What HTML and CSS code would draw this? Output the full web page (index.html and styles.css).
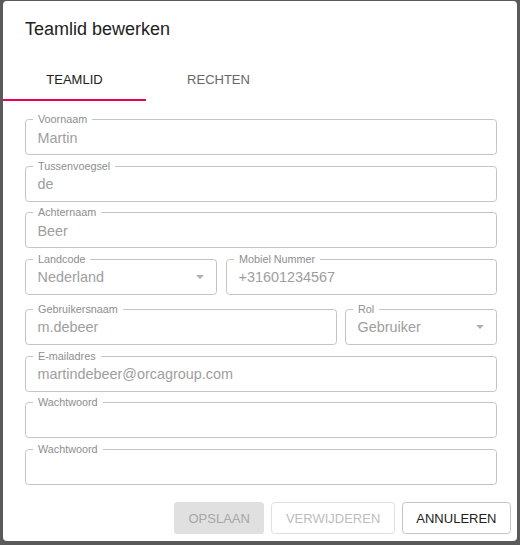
FILE: index.html
```html
<!DOCTYPE html>
<html lang="nl">
<head>
<meta charset="utf-8">
<title>Teamlid bewerken</title>
<link rel="stylesheet" href="styles.css">
</head>
<body>
<div class="dialog">
  <h2 class="title">Teamlid bewerken</h2>
  <div class="tabs">
    <div class="tab active">TEAMLID</div>
    <div class="tab">RECHTEN</div>
  </div>
  <div class="content">
    <div class="field"><span class="label">Voornaam</span><div class="value">Martin</div></div>
    <div class="field"><span class="label">Tussenvoegsel</span><div class="value">de</div></div>
    <div class="field"><span class="label">Achternaam</span><div class="value">Beer</div></div>
    <div class="row row-country">
      <div class="field select"><span class="label">Landcode</span><div class="value">Nederland</div>
        <svg class="arrow" width="8" height="4" viewBox="0 0 8 4"><path d="M0 0h8L4 4z" fill="#b0b0b0"/></svg></div>
      <div class="field"><span class="label">Mobiel Nummer</span><div class="value">+31601234567</div></div>
    </div>
    <div class="row row-user">
      <div class="field"><span class="label">Gebruikersnaam</span><div class="value">m.debeer</div></div>
      <div class="field select"><span class="label">Rol</span><div class="value">Gebruiker</div>
        <svg class="arrow" width="8" height="4" viewBox="0 0 8 4"><path d="M0 0h8L4 4z" fill="#b0b0b0"/></svg></div>
    </div>
    <div class="field"><span class="label">E-mailadres</span><div class="value">martindebeer@orcagroup.com</div></div>
    <div class="field"><span class="label">Wachtwoord</span><div class="value"></div></div>
    <div class="field"><span class="label">Wachtwoord</span><div class="value"></div></div>
  </div>
  <div class="actions">
    <button class="btn btn-contained" disabled>OPSLAAN</button>
    <button class="btn btn-outlined" disabled>VERWIJDEREN</button>
    <button class="btn btn-outlined btn-active">ANNULEREN</button>
  </div>
</div>
</body>
</html>
```

FILE: styles.css
```css
* { box-sizing: border-box; }

html, body {
  margin: 0;
  padding: 0;
}

body {
  background: #5a5a5a;
  width: 520px;
  height: 545px;
  overflow: hidden;
  font-family: "Liberation Sans", Arial, sans-serif;
}

.dialog {
  margin: 1px 0 0 3px;
  width: 514px;
  height: 540px;
  background: #ffffff;
  border-radius: 4px;
  display: flex;
  flex-direction: column;
}

.title {
  margin: 0;
  padding: 14px 22px;
  font-size: 18px;
  line-height: 29px;
  font-weight: normal;
  color: #212121;
}

.tabs {
  display: flex;
  height: 43px;
}

.tab {
  width: 143px;
  display: flex;
  align-items: center;
  justify-content: center;
  font-size: 13px;
  color: #666666;
  border-bottom: 2px solid transparent;
  padding-top: 2px;
}

.tab + .tab {
  width: 145px;
}

.tab.active {
  color: #212121;
  border-bottom-color: #e6005a;
}

.content {
  padding: 18px 20px 0 22px;
  display: flex;
  flex-direction: column;
  gap: 10.6px;
}

.row {
  display: grid;
}

.row-country {
  grid-template-columns: 192px 1fr;
  column-gap: 9px;
}

.row-user {
  grid-template-columns: 1fr 152px;
  column-gap: 8px;
  margin-top: 3.6px;
}

.field {
  position: relative;
  height: 36px;
  border: 1px solid #c4c4c4;
  border-radius: 3.6px;
  display: flex;
  align-items: center;
}

.label {
  position: absolute;
  top: -7px;
  left: 7px;
  padding: 0 5px;
  background: #ffffff;
  font-size: 10.8px;
  line-height: 13px;
  color: #8e8e8e;
  white-space: nowrap;
}

.value {
  flex: 1;
  padding: 0 11.5px;
  font-size: 14.4px;
  line-height: 18px;
  color: #9e9e9e;
  white-space: nowrap;
  padding-top: 1px;
}

.arrow {
  margin-right: 12px;
  flex: none;
}

.actions {
  margin-top: auto;
  padding: 0 6px 7px 0;
  display: flex;
  justify-content: flex-end;
  gap: 7px;
}

.btn {
  height: 32px;
  padding: 0 13.5px;
  border-radius: 3.6px;
  font-family: "Liberation Sans", Arial, sans-serif;
  font-size: 13px;
  border: 1px solid transparent;
  background: transparent;
  color: #bdbdbd;
}

.btn-contained {
  background: #e0e0e0;
  color: #a6a6a6;
}

.btn-outlined {
  border-color: #e0e0e0;
}

.btn-active {
  border-color: #c4c4c4;
  color: #212121;
}
```
